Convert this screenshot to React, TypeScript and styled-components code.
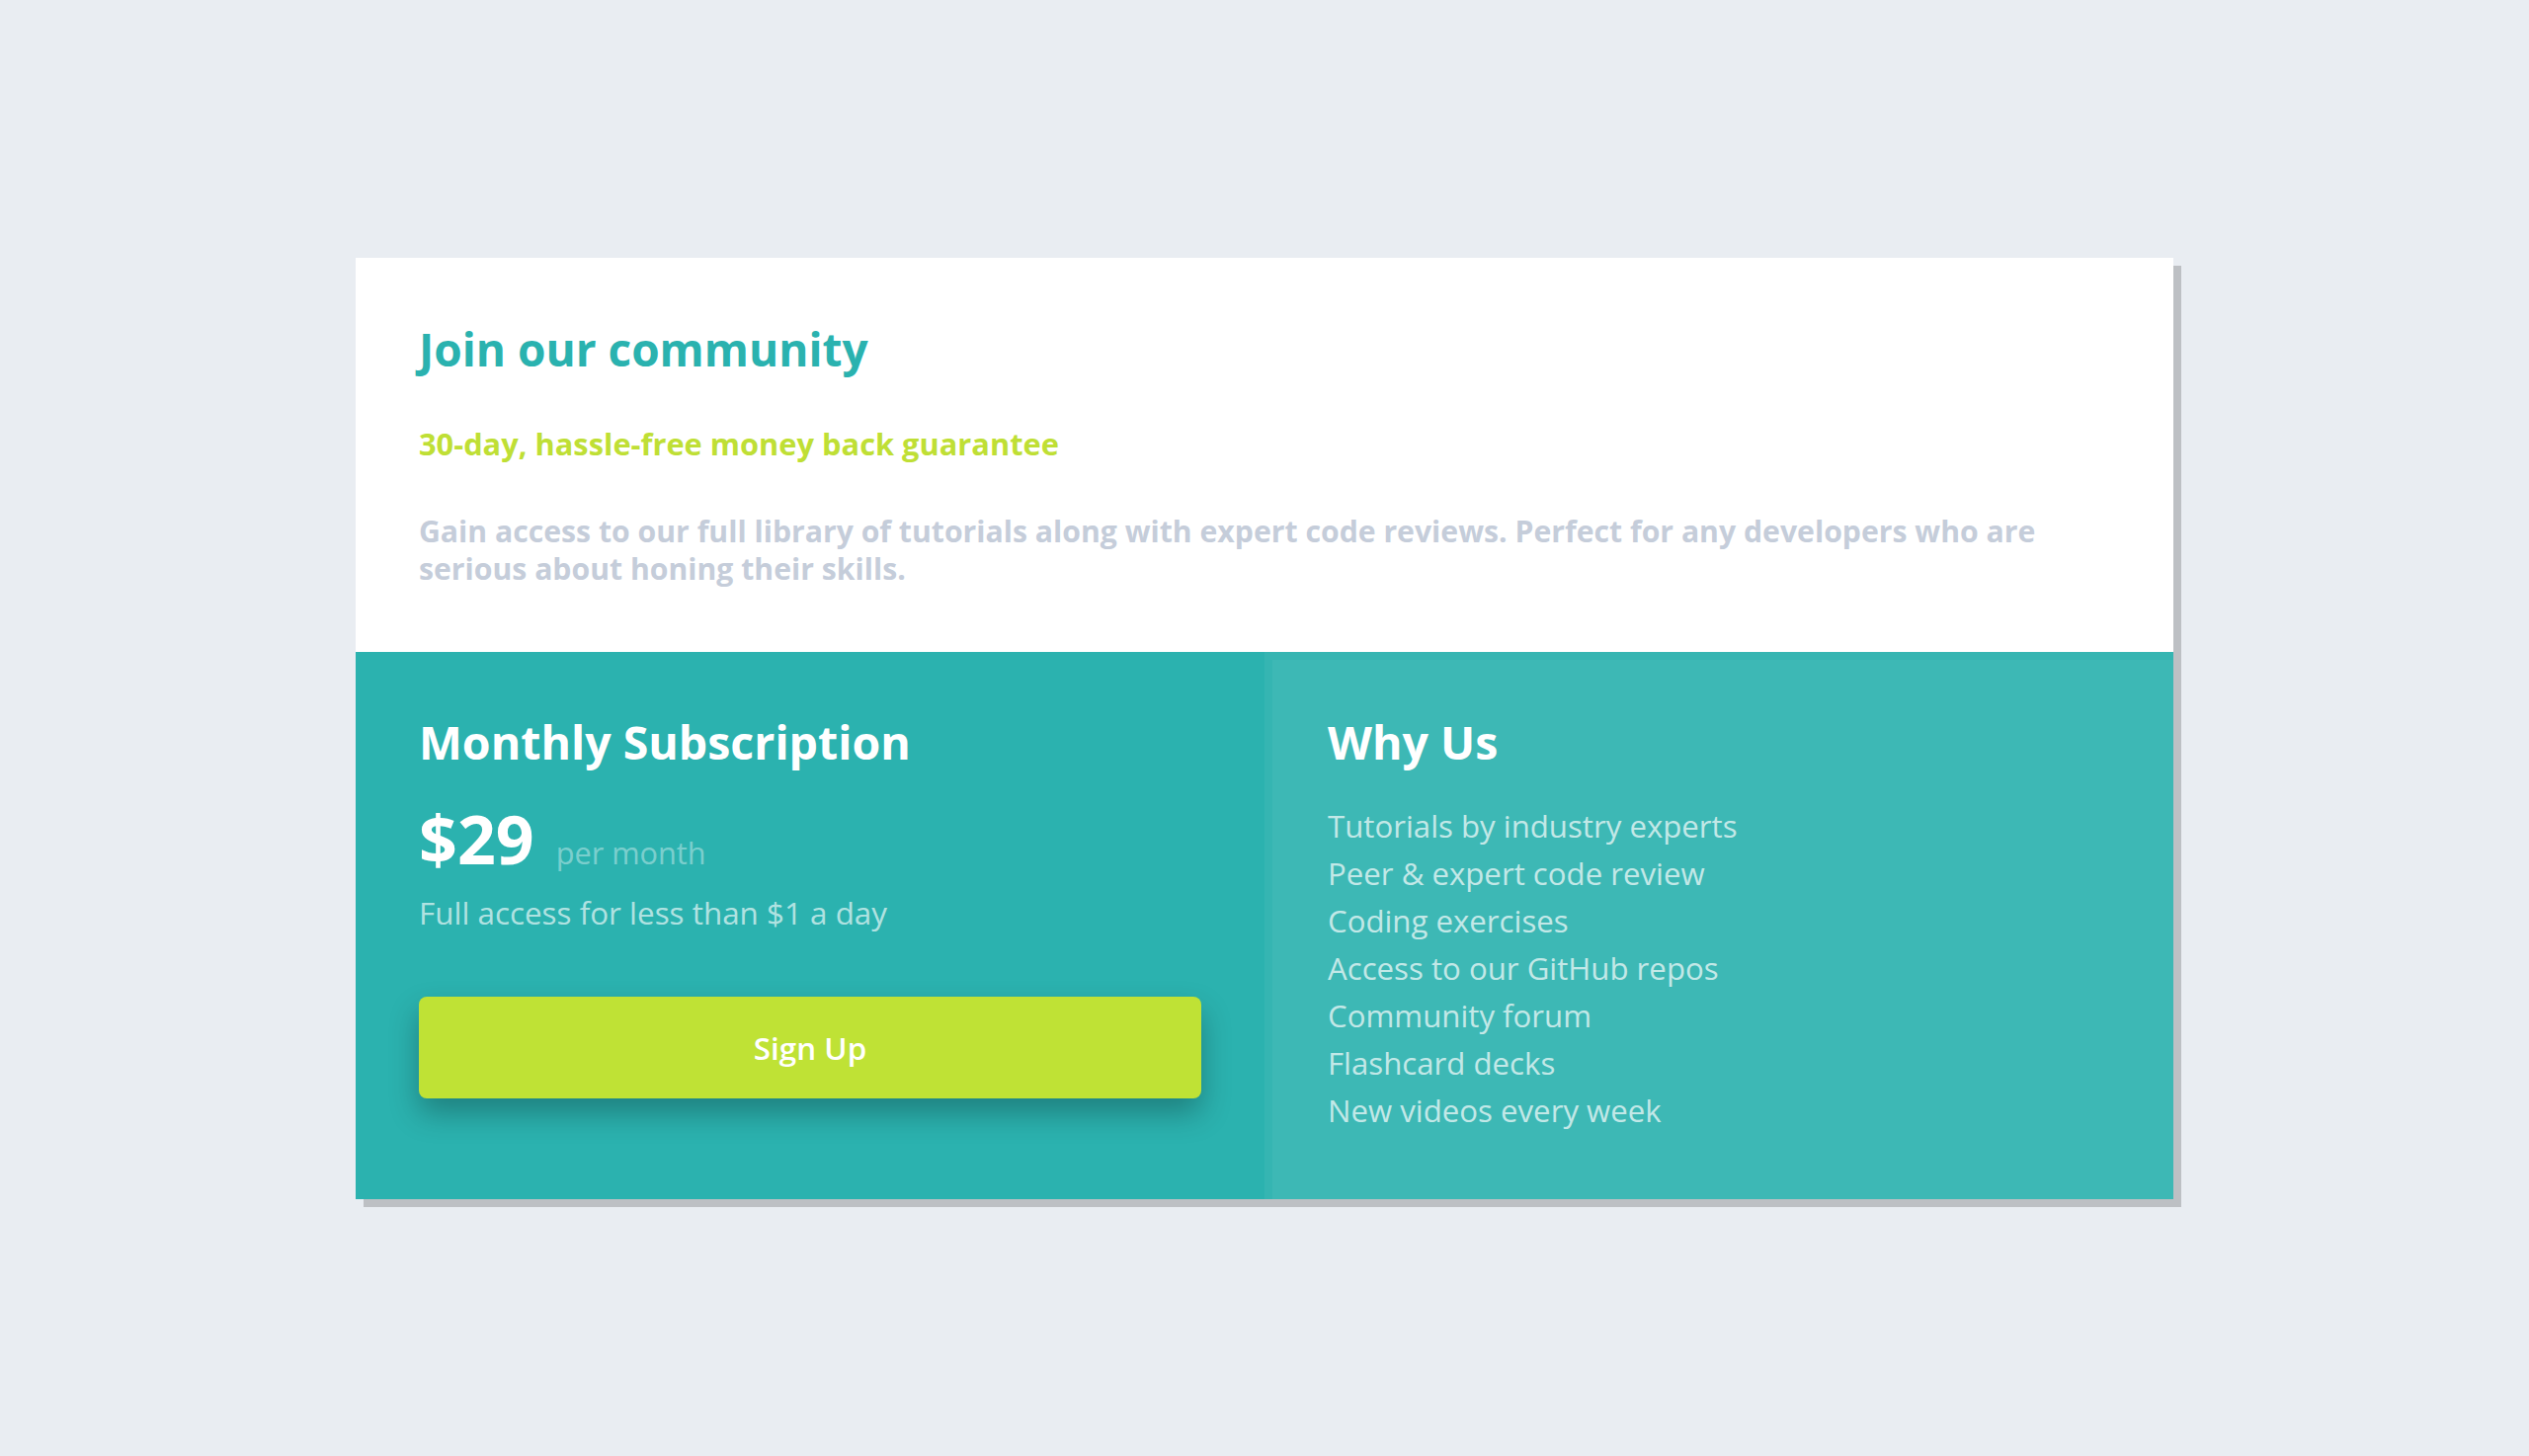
import React from "react";
import styled, { createGlobalStyle } from "styled-components";

const GlobalStyle = createGlobalStyle`
  * { box-sizing: border-box; }
  html, body { margin: 0; padding: 0; }
  body {
    background: #e9edf2;
    font-family: "Open Sans", "Noto Sans", "Liberation Sans", Arial, sans-serif;
  }
`;

const Page = styled.main`
  min-height: 100vh;
  display: flex;
  align-items: center;
  justify-content: center;
`;

const Card = styled.section`
  width: 1840px;
  background: #ffffff;
  box-shadow: 8px 8px 0 rgba(0, 0, 0, 0.19);
`;

const Intro = styled.div`
  padding: 68px 64px 65px;
`;

const Title = styled.h1`
  margin: 0;
  font-size: 46px;
  line-height: 48px;
  font-weight: 700;
  color: #2ab2af;
`;

const Guarantee = styled.h2`
  margin: 56px 0 0;
  font-size: 30.8px;
  line-height: 32px;
  font-weight: 700;
  color: #bfdf35;
`;

const Lead = styled.p`
  margin: 54px 0 0;
  font-size: 30.2px;
  line-height: 38px;
  font-weight: 700;
  color: #c5cdda;
`;

const Columns = styled.div`
  display: grid;
  grid-template-columns: 1fr 1fr;
`;

const Column = styled.div<{ $tone: "dark" | "light" }>`
  padding: 67px 64px ${(p) => (p.$tone === "dark" ? "102px" : "64px")};
  background: ${(p) => (p.$tone === "dark" ? "#2bb2af" : "#3db8b5")};
  box-shadow: ${(p) => (p.$tone === "light" ? "inset 8px 8px 0 #35b5b2" : "none")};
  color: #ffffff;
`;

const ColumnTitle = styled.h3`
  margin: 0;
  font-size: 46.5px;
  line-height: 48px;
  font-weight: 700;
  color: #ffffff;
`;

const PriceRow = styled.div`
  margin-top: 42px;
  height: 63px;
  display: flex;
  align-items: baseline;
  gap: 22px;
`;

const Price = styled.span`
  font-size: 68px;
  line-height: 63px;
  font-weight: 700;
  color: #ffffff;
`;

const Period = styled.span`
  font-size: 30.7px;
  line-height: 1;
  font-weight: 400;
  color: rgba(255, 255, 255, 0.4);
`;

const Note = styled.p`
  margin: 29px 0 0;
  font-size: 31.4px;
  line-height: 30px;
  font-weight: 400;
  color: rgba(255, 255, 255, 0.65);
`;

const SignUp = styled.button`
  display: block;
  width: 100%;
  height: 103px;
  margin-top: 70px;
  border: none;
  border-radius: 8px;
  background: #bfe235;
  color: #ffffff;
  font-family: inherit;
  font-size: 31.4px;
  font-weight: 600;
  cursor: pointer;
  box-shadow: 0 15px 30px rgba(0, 0, 0, 0.28);
`;

const FeatureList = styled.ul`
  margin: 37px 0 0;
  padding: 0;
  list-style: none;
`;

const Feature = styled.li`
  font-size: 31.2px;
  line-height: 48px;
  color: rgba(255, 255, 255, 0.7);
`;

const features = [
  "Tutorials by industry experts",
  "Peer & expert code review",
  "Coding exercises",
  "Access to our GitHub repos",
  "Community forum",
  "Flashcard decks",
  "New videos every week",
];

export default function App() {
  return (
    <>
      <GlobalStyle />
      <Page>
        <Card>
          <Intro>
            <Title>Join our community</Title>
            <Guarantee>30-day, hassle-free money back guarantee</Guarantee>
            <Lead>
              Gain access to our full library of tutorials along with expert code reviews. Perfect for any
              developers who are serious about honing their skills.
            </Lead>
          </Intro>
          <Columns>
            <Column $tone="dark">
              <ColumnTitle>Monthly Subscription</ColumnTitle>
              <PriceRow>
                <Price>$29</Price>
                <Period>per month</Period>
              </PriceRow>
              <Note>Full access for less than $1 a day</Note>
              <SignUp>Sign Up</SignUp>
            </Column>
            <Column $tone="light">
              <ColumnTitle>Why Us</ColumnTitle>
              <FeatureList>
                {features.map((f) => (
                  <Feature key={f}>{f}</Feature>
                ))}
              </FeatureList>
            </Column>
          </Columns>
        </Card>
      </Page>
    </>
  );
}
